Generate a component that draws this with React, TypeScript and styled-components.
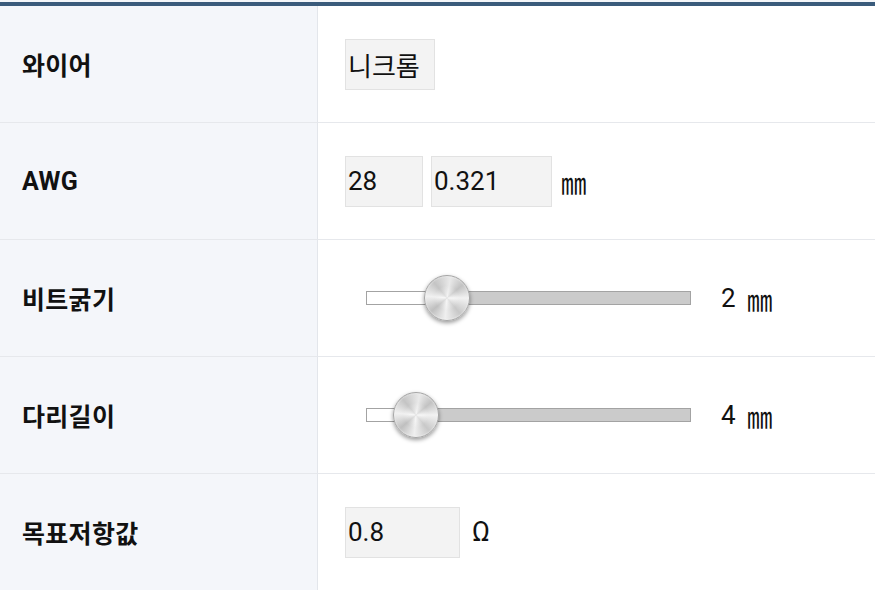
import React from "react";
import styled, { createGlobalStyle } from "styled-components";

const Global = createGlobalStyle`
  html, body { margin: 0; padding: 0; background: #f4f6f9; }
  body { font-family: Roboto, "Noto Sans CJK KR", "Noto Sans", sans-serif; color: #111; }
`;

const Page = styled.div`
  width: 875px;
  height: 590px;
  padding-top: 2px;
  box-sizing: border-box;
  overflow: hidden;
`;

const Table = styled.div`
  border-top: 4px solid #3a5b7b;
  display: grid;
  grid-template-columns: 318px 1fr;
  background: #fff;
`;

const LabelCell = styled.div`
  height: 116px;
  display: flex;
  align-items: center;
  padding-left: 22px;
  background: #f4f6fa;
  border-right: 1px solid #e3e6eb;
  border-bottom: 1px solid #e6e8ec;
  font-size: 25px;
  font-weight: 700;
  letter-spacing: 0.3px;
`;

const ValueCell = styled.div`
  height: 116px;
  display: flex;
  align-items: center;
  padding-left: 27px;
  gap: 8px;
  border-bottom: 1px solid #e6e8ec;
  font-size: 26px;
`;

const Box = styled.div<{ $w: number }>`
  width: ${(p) => p.$w}px;
  height: 51px;
  box-sizing: border-box;
  background: #f3f3f3;
  border: 1px solid #e2e2e2;
  display: flex;
  align-items: center;
  padding-left: 2px;
  font-size: 26px;
  color: #111;
`;

const Unit = styled.span<{ $ml?: number }>`
  margin-left: ${(p) => p.$ml ?? 0}px;
  font-size: 30px;
  font-family: "Noto Sans CJK KR", sans-serif;
  transform: scaleX(0.85);
  transform-origin: left center;
  display: inline-block;
`;

const Ohm = styled.span`
  margin-left: 4px;
  font-size: 27px;
`;

const SliderWrap = styled.div`
  margin-left: 21px;
  position: relative;
  width: 325px;
  height: 46px;
  display: flex;
  align-items: center;
`;

const Track = styled.div`
  width: 100%;
  height: 14px;
  box-sizing: border-box;
  border: 1px solid #a3a3a3;
  background: #cbcbcb;
  display: flex;
`;

const Fill = styled.div`
  height: 100%;
  background: #fff;
`;

const Thumb = styled.div`
  position: absolute;
  top: 0;
  width: 46px;
  height: 46px;
  margin-left: -23px;
  border-radius: 50%;
  box-sizing: border-box;
  border: 1px solid #a5a5a5;
  background:
    radial-gradient(circle at 50% 50%, rgba(255,255,255,0.6) 0, rgba(255,255,255,0) 40%),
    conic-gradient(from 10deg, #e9e9e9, #c2c2c2 40deg, #f2f2f2 80deg, #c8c8c8 130deg, #efefef 175deg, #bfbfbf 220deg, #f1f1f1 265deg, #c4c4c4 310deg, #e9e9e9);
  box-shadow: 0 2px 4px rgba(0,0,0,0.4), inset 0 0 2px rgba(255,255,255,0.8);
`;

const SliderValue = styled.div`
  margin-left: 22px;
  display: flex;
  align-items: center;
  font-size: 26px;
`;

function Slider({ pos, value }: { pos: number; value: string }) {
  return (
    <>
      <SliderWrap>
        <Track>
          <Fill style={{ width: `${pos}px` }} />
        </Track>
        <Thumb style={{ left: `${pos}px` }} />
      </SliderWrap>
      <SliderValue>
        {value}
        <Unit $ml={11}>㎜</Unit>
      </SliderValue>
    </>
  );
}

export default function App() {
  return (
    <Page>
      <Global />
      <Table>
        <LabelCell>와이어</LabelCell>
        <ValueCell>
          <Box $w={90}>니크롬</Box>
        </ValueCell>

        <LabelCell>AWG</LabelCell>
        <ValueCell>
          <Box $w={78}>28</Box>
          <Box $w={121}>0.321</Box>
          <Unit $ml={1}>㎜</Unit>
        </ValueCell>

        <LabelCell>비트굵기</LabelCell>
        <ValueCell>
          <Slider pos={81} value="2" />
        </ValueCell>

        <LabelCell>다리길이</LabelCell>
        <ValueCell>
          <Slider pos={50} value="4" />
        </ValueCell>

        <LabelCell>목표저항값</LabelCell>
        <ValueCell>
          <Box $w={115}>0.8</Box>
          <Ohm>Ω</Ohm>
        </ValueCell>
      </Table>
    </Page>
  );
}
